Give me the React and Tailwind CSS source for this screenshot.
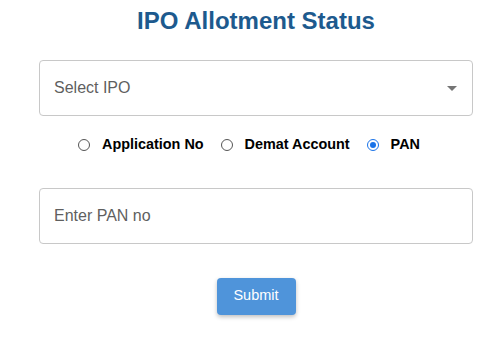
import { useState } from 'react'

const options = [
  { id: 'app', label: 'Application No' },
  { id: 'demat', label: 'Demat Account' },
  { id: 'pan', label: 'PAN' },
]

const App = () => {
  const [mode, setMode] = useState('pan')

  return (
    <div className="w-[500px] h-[346px] bg-white font-['Liberation_Sans',Arial,sans-serif] overflow-hidden">
      <div className="ml-[39px] w-[434px] flex flex-col">
        {/* Title */}
        <h1 className="mt-[6px] text-center text-[24px] leading-[30px] font-bold text-[#1d5a8e]">
          IPO Allotment Status
        </h1>

        {/* Select */}
        <div className="mt-[24px] h-[56px] border border-[#c8c8c8] rounded-[4px] flex items-center justify-between pl-[14px] pr-[14px]">
          <span className="text-[16px] text-[#5f5f5f]">Select IPO</span>
          <svg width="10" height="5" viewBox="0 0 10 5" className="mr-[1px]">
            <path d="M0 0 L10 0 L5 5 Z" fill="#757575" />
          </svg>
        </div>

        {/* Radios */}
        <div className="mt-[18px] flex items-center justify-center gap-[17px] pr-[14px]">
          {options.map((o) => (
            <label key={o.id} className="flex items-center gap-[12px] cursor-pointer" onClick={() => setMode(o.id)}>
              <span
                className={`w-[12px] h-[12px] rounded-full border flex items-center justify-center ${
                  mode === o.id ? 'border-[#1a73e8]' : 'border-[#555]'
                }`}
              >
                {mode === o.id && <span className="w-[6px] h-[6px] rounded-full bg-[#1a73e8]" />}
              </span>
              <span className="text-[14.4px] font-bold text-black">{o.label}</span>
            </label>
          ))}
        </div>

        {/* Input */}
        <div className="mt-[32px] h-[56px] border border-[#c8c8c8] rounded-[4px] flex items-center pl-[14px]">
          <span className="text-[16px] text-[#5f5f5f]">Enter PAN no</span>
        </div>

        {/* Submit */}
        <div className="mt-[34px] flex justify-center">
          <button className="w-[79px] h-[37px] rounded-[4px] bg-[#4f94da] text-white text-[14.5px] shadow-[0_2px_4px_rgba(0,0,0,0.25)]">
            Submit
          </button>
        </div>
      </div>
    </div>
  )
}

export default App
